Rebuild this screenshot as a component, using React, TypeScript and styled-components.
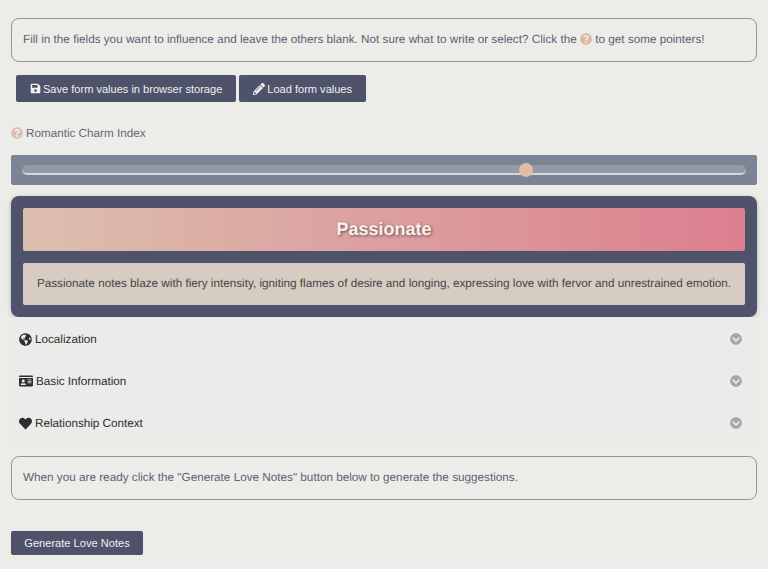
import React, { FC } from "react";
import styled, { createGlobalStyle } from "styled-components";
import {
    FaChevronCircleDown,
    FaGlobeAmericas,
    FaHeart,
    FaIdCard,
    FaPencilAlt,
    FaQuestionCircle,
    FaSave,
} from "react-icons/fa";

const GlobalStyle = createGlobalStyle`
    html, body {
        margin: 0;
        padding: 0;
        background: #ecede8;
        font-family: "Liberation Sans", Arial, sans-serif;
        text-rendering: geometricPrecision;
    }
`

const sections = [
    { title: "Localization", icon: <FaGlobeAmericas size={13} /> },
    { title: "Basic Information", icon: <FaIdCard size={14} /> },
    { title: "Relationship Context", icon: <FaHeart size={13} /> },
]

const App: FC = () => {
    return <>
        <GlobalStyle />
        <Page>
            <InfoBox>
                Fill in the fields you want to influence and leave the others blank. Not sure what to write or select? Click the <InlineHelp><FaQuestionCircle size={12} /></InlineHelp> to get some pointers!
            </InfoBox>
            <Actions>
                <Button><FaSave size={11} /> Save form values in browser storage</Button>
                <Button><FaPencilAlt size={12} /> Load form values</Button>
            </Actions>
            <Label><FaQuestionCircle size={12} color="#dcbfae" /> Romantic Charm Index</Label>
            <SliderPanel>
                <Track>
                    <Thumb $percent={69.6} />
                </Track>
            </SliderPanel>
            <ToneCard>
                <ToneTitle>Passionate</ToneTitle>
                <ToneText>Passionate notes blaze with fiery intensity, igniting flames of desire and longing, expressing love with fervor and unrestrained emotion.</ToneText>
            </ToneCard>
            <Accordion>
                {sections.map(section => (
                    <AccordionRow key={section.title}>
                        <RowTitle>{section.icon} {section.title}</RowTitle>
                        <FaChevronCircleDown size={12} color="#a5a5a5" />
                    </AccordionRow>
                ))}
            </Accordion>
            <InfoBox>
                When you are ready click the "Generate Love Notes" button below to generate the suggestions.
            </InfoBox>
            <GenerateButton>Generate Love Notes</GenerateButton>
        </Page>
    </>
}

const Page = styled.div`
    display: flex;
    flex-direction: column;
    align-items: stretch;
    padding: 18px 11px 14px;
    height: 569px;
    box-sizing: border-box;
    overflow: hidden;
`

const InfoBox = styled.div`
    box-sizing: border-box;
    height: 44px;
    line-height: 42px;
    padding: 0 11px;
    border: 1px solid #9095a3;
    border-radius: 8px;
    color: #5e6173;
    font-size: 11.72px;
    white-space: nowrap;
`

const InlineHelp = styled.span`
    color: #dcb5a3;
    vertical-align: -2px;
`

const Actions = styled.div`
    display: flex;
    gap: 3px;
    margin: 13px 0 0 5px;
`

const Button = styled.button`
    display: flex;
    align-items: center;
    justify-content: center;
    gap: 2px;
    height: 27px;
    padding: 0 14px;
    border: none;
    border-radius: 2px;
    background: #4e526a;
    color: #f0f0ee;
    font-family: inherit;
    font-size: 11.05px;
`

const Label = styled.div`
    display: flex;
    align-items: center;
    gap: 3px;
    margin-top: 24px;
    height: 14px;
    color: #66697a;
    font-size: 11.7px;
`

const SliderPanel = styled.div`
    display: flex;
    align-items: center;
    height: 30px;
    margin-top: 15px;
    padding: 0 11px;
    border-radius: 2px;
    background: #7a8493;
`

const Track = styled.div`
    position: relative;
    flex: 1;
    height: 10px;
    box-sizing: border-box;
    border-radius: 5px;
    border-bottom: 2px solid #d5d8da;
    background: #929aa7;
`

const Thumb = styled.div<{ $percent: number }>`
    position: absolute;
    left: ${props => props.$percent}%;
    top: -2px;
    width: 14px;
    height: 14px;
    margin-left: -7px;
    border-radius: 50%;
    background: #dfbda6;
`

const ToneCard = styled.div`
    display: flex;
    flex-direction: column;
    gap: 12px;
    margin-top: 11px;
    padding: 12px;
    border-radius: 8px;
    background: #4e526a;
    box-shadow: 0 1px 4px rgba(77, 80, 104, 0.4);
`

const ToneTitle = styled.div`
    height: 43px;
    line-height: 42px;
    border-radius: 2px;
    background: linear-gradient(90deg, #dcbfae 0%, #dc7f8f 100%);
    color: #f6f2ef;
    font-size: 18px;
    font-weight: bold;
    text-align: center;
    text-shadow: 1px 1px 3px rgba(60, 40, 50, 0.7);
`

const ToneText = styled.div`
    height: 42px;
    line-height: 41px;
    border-radius: 2px;
    background: #d6ccc1;
    color: #454547;
    font-size: 11.73px;
    text-align: center;
    white-space: nowrap;
`

const Accordion = styled.div`
    display: flex;
    flex-direction: column;
    margin-bottom: 13px;
`

const AccordionRow = styled.div`
    display: flex;
    align-items: center;
    justify-content: space-between;
    box-sizing: border-box;
    height: 42px;
    padding: 2px 15px 0 8px;
    background: #ebebe9;
`

const RowTitle = styled.div`
    display: flex;
    align-items: center;
    gap: 3px;
    color: #2e2e30;
    font-size: 11.7px;
`

const GenerateButton = styled.button`
    align-self: flex-start;
    width: 132px;
    height: 24px;
    margin-top: 31px;
    border: none;
    border-radius: 2px;
    background: #4e526a;
    color: #f0f0ee;
    font-family: inherit;
    font-size: 11.1px;
`

export default App;
